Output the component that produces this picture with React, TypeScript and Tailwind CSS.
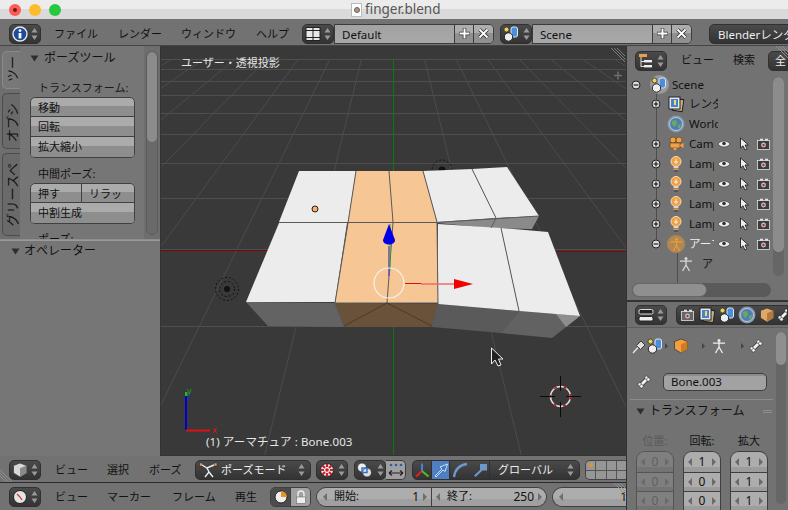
import type { ReactNode } from "react";

const dark = "bg-[linear-gradient(#4a4a4a,#333333)] border border-[#303030]";
const btn = "bg-[linear-gradient(#ababab_45%,#8e8e8e_45%)] border-[#404040]";

function UpDown({ light = false }: { light?: boolean }) {
  const c = light ? "#d0d0d0" : "#9a9a9a";
  return (
    <svg width="7" height="14" viewBox="0 0 7 14">
      <path d="M3.5 1 L6.5 5.5 H0.5 Z" fill={c} />
      <path d="M3.5 13 L6.5 8.5 H0.5 Z" fill={c} />
    </svg>
  );
}

function InfoIcon() {
  return (
    <svg width="16" height="16" viewBox="0 0 16 16">
      <circle cx="8" cy="8" r="7" fill="#1c4d9c" stroke="#e8e8e8" strokeWidth="1.4" />
      <circle cx="8" cy="4.6" r="1.4" fill="#fff" />
      <rect x="6.6" y="7" width="2.8" height="5.4" fill="#fff" />
    </svg>
  );
}

function LayoutIcon() {
  return (
    <svg width="16" height="16" viewBox="0 0 16 16">
      <rect x="1" y="1.5" width="14" height="13" fill="#e8e8e8" stroke="#222" />
      <path d="M8 1.5 V14.5 M1 4.5 H8 M8 4.5 H15 M1 11.5 H8 M8 11.5 H15" stroke="#222" />
    </svg>
  );
}

function SceneIcon() {
  return (
    <svg width="18" height="18" viewBox="0 0 18 18">
      <circle cx="4.5" cy="4.5" r="2.5" fill="#e8d25a" stroke="#333" strokeWidth="0.8" />
      <rect x="9" y="2" width="6.5" height="10" rx="2" fill="#4a8fdc" stroke="#dfe8f2" />
      <circle cx="6.5" cy="12" r="4.2" fill="#eee" stroke="#222" />
    </svg>
  );
}

function OutlinerIcon() {
  return (
    <svg width="16" height="16" viewBox="0 0 16 16">
      <rect x="1" y="1" width="8" height="3" fill="#e8a050" />
      <path d="M3 4 V14 M3 8.5 H6 M3 13.5 H6" stroke="#e0e0e0" />
      <rect x="6" y="7" width="8" height="2.4" fill="#eee" />
      <rect x="6" y="12" width="8" height="2.4" fill="#eee" />
    </svg>
  );
}

function PropsIcon() {
  return (
    <svg width="16" height="16" viewBox="0 0 16 16">
      <rect x="1" y="2.5" width="14" height="4.5" rx="1.5" fill="#222" stroke="#ddd" />
      <rect x="1" y="9.5" width="14" height="4.5" rx="1.5" fill="#eee" stroke="#222" />
    </svg>
  );
}

function CubeIcon({ fill = "#d8d8d8", side = "#8a8a8a" }: { fill?: string; side?: string }) {
  return (
    <svg width="16" height="16" viewBox="0 0 16 16">
      <path d="M8 1 L14.5 3.5 V11 L8 15 L1.5 11 V3.5 Z" fill={fill} stroke="#333" strokeWidth="0.7" />
      <path d="M8 6.2 V15 L14.5 11 V3.5 Z" fill={side} />
    </svg>
  );
}

function ClockIcon() {
  return (
    <svg width="16" height="16" viewBox="0 0 16 16">
      <circle cx="8" cy="8" r="6.5" fill="#e4e4e4" stroke="#222" />
      <path d="M8 8 L5 5 M8 8 L10 11" stroke="#c83a30" strokeWidth="1.3" />
    </svg>
  );
}

function PoseManIcon({ color = "#eee", size = 16 }: { color?: string; size?: number }) {
  return (
    <svg width={size} height={size} viewBox="0 0 16 16">
      <circle cx="8" cy="2.6" r="1.5" fill={color} />
      <path d="M2 5.2 H14 M8 4 V9 L4.5 15 M8 9 L11.5 15" stroke={color} strokeWidth="1.3" fill="none" />
    </svg>
  );
}

function PoseModeIcon() {
  return (
    <svg width="20" height="16" viewBox="0 0 20 16">
      <rect x="0.5" y="1" width="3" height="3" fill="#e8a050" stroke="#222" strokeWidth="0.5" />
      <rect x="15" y="1" width="3" height="3" fill="#e8a050" stroke="#222" strokeWidth="0.5" />
      <path d="M3 3 L8 6 L15 3 M8 6 L10 10 L6 15 M10 10 L14 15" stroke="#eee" strokeWidth="1.4" fill="none" />
    </svg>
  );
}

function PivotIcon() {
  return (
    <svg width="16" height="16" viewBox="0 0 16 16">
      <circle cx="8" cy="8" r="6.5" fill="#eee" stroke="#222" />
      <path d="M8 1.5 V5 M8 11 V14.5 M1.5 8 H5 M11 8 H14.5 M3.5 3.5 L6 6 M10 10 L12.5 12.5 M12.5 3.5 L10 6 M6 10 L3.5 12.5" stroke="#c8202c" strokeWidth="2.2" />
      <circle cx="8" cy="8" r="1.8" fill="#c8202c" />
    </svg>
  );
}

function ShadeIcon() {
  return (
    <svg width="18" height="16" viewBox="0 0 18 16">
      <circle cx="6" cy="5.5" r="4.5" fill="#eee" stroke="#222" strokeWidth="0.7" />
      <circle cx="11" cy="10.5" r="4.5" fill="#ddd" stroke="#222" strokeWidth="0.7" />
      <rect x="6" y="6" width="5" height="4.5" fill="none" stroke="#2a6fd0" strokeWidth="1.4" />
    </svg>
  );
}

function ManipIcon({ kind }: { kind: "axes" | "move" | "rot" | "scale" }) {
  if (kind === "axes") {
    return (
      <svg width="16" height="16" viewBox="0 0 16 16">
        <path d="M8 9 V1.5" stroke="#4a7fd8" strokeWidth="2" />
        <path d="M8 9 L2 14.5" stroke="#e02020" strokeWidth="2" />
        <path d="M8 9 L14.5 14.5" stroke="#50c020" strokeWidth="2" />
      </svg>
    );
  }
  const c = kind === "move" ? "#dce8f8" : "#6f97c8";
  return (
    <svg width="16" height="16" viewBox="0 0 16 16">
      {kind === "move" && (
        <path d="M2 14 L9 7 L7 5 L14.5 2 L12 9.5 L10 8 L3 15 Z" fill="#3a78c8" stroke={c} strokeWidth="0.9" />
      )}
      {kind === "rot" && <path d="M2 15 C3 7 8 3 15 2" stroke={c} strokeWidth="2.4" fill="none" />}
      {kind === "scale" && (
        <g fill={c}>
          <path d="M2 13.5 L9 7 L10.5 8.5 L3.5 15 Z" />
          <rect x="8" y="2" width="7" height="6.5" />
        </g>
      )}
    </svg>
  );
}

function TransformLinks() {
  return (
    <svg width="18" height="16" viewBox="0 0 18 16">
      <circle cx="4" cy="3" r="1.3" fill="#2a5fa0" />
      <circle cx="9" cy="3" r="1.3" fill="#2a5fa0" />
      <circle cx="14" cy="3" r="1.3" fill="#2a5fa0" />
      <path d="M2 11 H16 M2 11 L5 8.5 M2 11 L5 13.5 M16 11 L13 8.5 M16 11 L13 13.5" stroke="#222" strokeWidth="1.2" fill="none" />
    </svg>
  );
}

function EyeIcon() {
  return (
    <svg width="14" height="10" viewBox="0 0 14 10">
      <path d="M1 5 C4 1 10 1 13 5 C10 9 4 9 1 5 Z" fill="#eee" stroke="#333" strokeWidth="0.6" />
      <circle cx="7" cy="4.5" r="1.8" fill="#333" />
    </svg>
  );
}

function CursorIcon() {
  return (
    <svg width="11" height="14" viewBox="0 0 11 14">
      <path d="M1.5 1 V11 L4 8.8 L6 13 L8 12 L6 8 H9.5 Z" fill="#eee" stroke="#222" strokeWidth="0.9" />
    </svg>
  );
}

function CamIcon({ tone = "#3c3c3c" }: { tone?: string }) {
  return (
    <svg width="13" height="12" viewBox="0 0 13 12">
      <rect x="0.5" y="2.5" width="12" height="9" fill={tone} stroke="#e0e0e0" strokeWidth="0.8" />
      <rect x="3" y="0.7" width="3" height="2" fill="#e0e0e0" />
      <rect x="8" y="0.7" width="3" height="2" fill="#e0e0e0" />
      <circle cx="6.5" cy="7" r="2.4" fill="#c8c8c8" />
      <circle cx="6.5" cy="7" r="1.2" fill="#c02828" />
    </svg>
  );
}

function LampIcon() {
  return (
    <svg width="12" height="16" viewBox="0 0 12 16">
      <circle cx="6" cy="5.5" r="5" fill="#f0a048" stroke="#ffe0b0" />
      <path d="M6 3 V8 M4 6 H8" stroke="#fff3d8" />
      <rect x="3.5" y="10.5" width="5" height="1.4" fill="#e0e0e0" />
      <rect x="3.5" y="12.5" width="5" height="1.4" fill="#e0a050" />
      <rect x="4" y="14.4" width="4" height="1.2" fill="#444" />
    </svg>
  );
}

function CameraObjIcon() {
  return (
    <svg width="16" height="16" viewBox="0 0 16 16">
      <circle cx="5" cy="4" r="3" fill="#f0a048" stroke="#5a3a10" strokeWidth="0.6" />
      <circle cx="11" cy="4" r="3" fill="#f0a048" stroke="#5a3a10" strokeWidth="0.6" />
      <rect x="2" y="7" width="10" height="5" fill="#f0a048" stroke="#5a3a10" strokeWidth="0.6" />
      <path d="M12 9 L15.5 7 V12 L12 10 Z" fill="#f0a048" />
      <path d="M5 12 H9 L7 15 Z" fill="#f0a048" />
    </svg>
  );
}

function RenderIcon() {
  return (
    <svg width="18" height="18" viewBox="0 0 18 18">
      <rect x="6" y="4" width="10" height="12" fill="#c8b080" stroke="#222" transform="rotate(8 11 10)" />
      <rect x="2" y="2" width="11" height="12" fill="#e8e8e8" stroke="#222" />
      <rect x="4" y="4" width="7" height="8" fill="#4a80d0" />
      <rect x="7" y="5" width="2" height="5" fill="#f0e060" />
    </svg>
  );
}

function WorldIcon() {
  return (
    <svg width="18" height="18" viewBox="0 0 18 18">
      <circle cx="9" cy="9" r="8.5" fill="#8797aa" />
      <circle cx="9" cy="9" r="6.5" fill="#4f7fb0" stroke="#dde" strokeWidth="0.7" />
      <path d="M5 6 L9 5 L10 9 L7 12 L5 9 Z M11 10 L14 9 L13 13 L11 13 Z" fill="#6ea860" />
    </svg>
  );
}

function BoneIcon() {
  return (
    <svg width="14" height="14" viewBox="0 0 14 14">
      <path d="M4 10 L10 4" stroke="#222" strokeWidth="4.2" />
      <path d="M4 10 L10 4" stroke="#f2f2f2" strokeWidth="3" />
      <circle cx="2.8" cy="9.5" r="1.8" fill="#f2f2f2" stroke="#222" strokeWidth="0.5" />
      <circle cx="4.5" cy="11.3" r="1.8" fill="#f2f2f2" stroke="#222" strokeWidth="0.5" />
      <circle cx="9.5" cy="2.8" r="1.8" fill="#f2f2f2" stroke="#222" strokeWidth="0.5" />
      <circle cx="11.3" cy="4.5" r="1.8" fill="#f2f2f2" stroke="#222" strokeWidth="0.5" />
    </svg>
  );
}

function PinIcon() {
  return (
    <svg width="15" height="15" viewBox="0 0 15 15">
      <path d="M1 14 L6 8.5" stroke="#eee" strokeWidth="1.2" />
      <path d="M4.5 6.5 L9 2 L13 6 L8.5 10.5 Z" fill="#dedede" stroke="#222" strokeWidth="0.8" />
    </svg>
  );
}

// the little diagonal corner handle of a Blender area
function Hatch({ className, flip = false }: { className: string; flip?: boolean }) {
  return (
    <svg width="12" height="12" viewBox="0 0 12 12" className={`absolute ${className}`}>
      <path
        d={flip ? "M0 0 L12 12 M3 0 L12 9 M6 0 L12 6" : "M0 0 L12 12 M0 3 L9 12 M0 6 L6 12"}
        stroke="#8e8e8e"
      />
    </svg>
  );
}

function DropBtn({ icon, w = 32 }: { icon: ReactNode; w?: number }) {
  return (
    <div
      className={`h-[20px] rounded-[5px] ${dark} flex items-center justify-center gap-[3px] shrink-0`}
      style={{ width: w }}
    >
      {icon}
      <UpDown />
    </div>
  );
}

function NameField({ name, w }: { name: string; w: string }) {
  return (
    <div className="h-[20px] flex shrink-0 border border-[#3c3c3c] rounded-r-[5px] overflow-hidden text-[11.5px] text-[#111]">
      <div className={`${w} bg-[linear-gradient(#a2a2a2,#a8a8a8)] border-r border-[#3c3c3c] pl-[7px] leading-[19px]`}>{name}</div>
      <div className="w-[19px] bg-[linear-gradient(#adadad_45%,#909090_45%)] border-r border-[#3c3c3c] flex items-center justify-center">
        <svg width="13" height="13" viewBox="0 0 13 13">
          <path d="M6.5 1 V12 M1 6.5 H12" stroke="#333" strokeWidth="3.4" />
          <path d="M6.5 1.5 V11.5 M1.5 6.5 H11.5" stroke="#fff" strokeWidth="2" />
        </svg>
      </div>
      <div className="w-[19px] bg-[linear-gradient(#adadad_45%,#909090_45%)] flex items-center justify-center">
        <svg width="11" height="11" viewBox="0 0 11 11">
          <path d="M1.5 1.5 L9.5 9.5 M9.5 1.5 L1.5 9.5" stroke="#222" strokeWidth="3.4" />
          <path d="M1.5 1.5 L9.5 9.5 M9.5 1.5 L1.5 9.5" stroke="#fff" strokeWidth="2" />
        </svg>
      </div>
    </div>
  );
}

function Tri({ size = 9 }: { size?: number }) {
  return (
    <svg width={size} height={size - 2} viewBox="0 0 9 7" className="shrink-0">
      <path d="M0.5 0.5 H8.5 L4.5 6.5 Z" fill="#2e2e2e" />
    </svg>
  );
}

function Grip({ className = "" }: { className?: string }) {
  return (
    <span className={`w-[8px] h-[5px] bg-[radial-gradient(#b8b8b8_40%,transparent_45%)] bg-[length:2px_2px] ${className}`} />
  );
}

function ToolButton({ label, className = "" }: { label: string; className?: string }) {
  return (
    <div className={`h-[20px] border ${btn} pl-[7px] leading-[20px] text-[11px] text-[#111] ${className}`}>
      {label}
    </div>
  );
}

function SideTab({ label, className }: { label: string; className: string }) {
  return (
    <div className={`w-[19px] border border-r-0 border-[#4c4c4c] rounded-l-[5px] flex justify-center items-end ${className}`}>
      <span className="[writing-mode:vertical-rl] [text-orientation:sideways] rotate-180 text-[13px] leading-[17px] text-[#111] whitespace-nowrap">
        {label}
      </span>
    </div>
  );
}

function Tree({ children, x = 0, icon, label, tools = true, labelClass = "text-[#111]" }: {
  children?: ReactNode;
  x?: number;
  icon: ReactNode;
  label: string;
  tools?: boolean;
  labelClass?: string;
}) {
  return (
    <div className="h-[20px] flex items-center text-[11.5px] shrink-0 relative">
      <div className="shrink-0" style={{ width: x }} />
      <div className="w-[14px] flex justify-center shrink-0">{children}</div>
      <div className="w-[24px] flex justify-center shrink-0 ml-[1px]">{icon}</div>
      <div className={`w-[29px] ml-[1px] overflow-hidden whitespace-nowrap ${labelClass}`}>{label}</div>
      {tools && (
        <div className="flex items-center">
          <div className="w-[20px] flex justify-center"><EyeIcon /></div>
          <div className="w-[20px] flex justify-center"><CursorIcon /></div>
          <div className="w-[18px] flex justify-center"><CamIcon /></div>
        </div>
      )}
    </div>
  );
}

function Expander({ minus = false }: { minus?: boolean }) {
  return (
    <svg width="10" height="10" viewBox="0 0 10 10">
      <circle cx="5" cy="5" r="4" fill="#dcdcdc" stroke="#222" />
      <path d={minus ? "M2.6 5 H7.4" : "M2.6 5 H7.4 M5 2.6 V7.4"} stroke="#111" strokeWidth="1.1" />
    </svg>
  );
}

function NumCol({ label, values, off = false }: { label: string; values: string[]; off?: boolean }) {
  const text = off ? "text-[#5f5f5f]" : "text-[#111]";
  return (
    <div className="flex flex-col items-center w-[38px]">
      <div className={`h-[19px] text-[11px] leading-[19px] ${off ? "text-[#5a5a5a]" : "text-[#111]"}`}>{label}</div>
      <div className={`mt-[1px] w-full rounded-t-[9px] border border-b-0 ${off ? "border-[#555]" : "border-[#3f3f3f]"} overflow-hidden`}>
        {values.map((v, i) => (
          <div
            key={i}
            className={`h-[19.5px] flex items-center justify-between px-[4px] text-[12px] ${text} ${off ? "bg-[linear-gradient(#7f7f7f_75%,#747474_75%)]" : "bg-[linear-gradient(#adadad_75%,#9c9c9c_75%)]"} ${i ? "border-t " + (off ? "border-[#555]" : "border-[#3f3f3f]") : ""}`}
          >
            <span className="w-0 h-0 border-y-[4px] border-y-transparent border-r-[4px] border-r-[#6a6a6a]" />
            {v}
            <span className="w-0 h-0 border-y-[4px] border-y-transparent border-l-[4px] border-l-[#6a6a6a]" />
          </div>
        ))}
      </div>
    </div>
  );
}

function RangeField({ label, value, className }: { label: string; value: string; className: string }) {
  return (
    <div className={`h-full bg-[linear-gradient(#adadad_60%,#a0a0a0_60%)] flex items-center px-[4px] text-[11px] text-[#111] ${className}`}>
      <span className="w-0 h-0 border-y-[4px] border-y-transparent border-r-[4px] border-r-[#6e6e6e] mr-[7px]" />
      <span>{label}</span>
      <span className="ml-auto text-[12px] mr-[4px]">{value}</span>
      <span className="w-0 h-0 border-y-[4px] border-y-transparent border-l-[4px] border-l-[#6e6e6e]" />
    </div>
  );
}

function Scene3D() {
  const rows = [13, 23, 35, 49, 67, 88, 117, 152, 203, 280];
  const rays = [-9, -8, -7, -6, -5, -4, -3, -2, -1, 1, 2, 3, 4, 5, 6, 7, 8, 9];
  const rayX = (k: number, y: number) => 232 + (k * 98 * (y + 116)) / 401;
  return (
    <svg width="465" height="410" viewBox="0 0 465 410" className="absolute inset-0">
      {rows.map((y) => (
        <path key={y} d={`M0 ${y + 0.5} H465`} stroke="#4f4f4f" />
      ))}
      {rays.map((k) => (
        <path key={k} d={`M${rayX(k, 13)} 13 L${rayX(k, 410)} 410`} stroke="#4c4c4c" />
      ))}
      <path d="M232.5 14 V410" stroke="#0a7a0a" />
      <path d="M0 204.5 H110" stroke="#7c0606" />
      <path d="M395 205.5 H465" stroke="#8a0808" />

      {/* far lamp sits behind the mesh */}
      <circle cx="281" cy="124" r="10" fill="none" stroke="#111" strokeDasharray="2 2" />
      <circle cx="281" cy="124" r="3.5" fill="#111" />

      <polygon points="276,176 378,170 371,183 330,182 276,177" fill="#8a8a8a" />
      <polygon points="138,125 195,125 187,176 118,176" fill="#ececec" />
      <polygon points="262,125 311,123 335,172 276,176" fill="#ececec" />
      <polygon points="311,123 346,121 378,170 335,172" fill="#ececec" />
      <polygon points="85,256 174,257 183,281 107,280" fill="#636363" />
      <polygon points="277,258 358,265 340,287 271,281" fill="#5a5a5a" />
      <polygon points="358,265 419,270 391,292 340,287" fill="#626262" />
      <polygon points="395,268 419,270 405,281" fill="#8e8e8e" />
      <polygon points="174,257 277,258 271,281 183,281" fill="#6a5139" />
      <polygon points="118,177 186,177 174,256 85,256" fill="#ececec" />
      <polygon points="277,178 340,182 358,265 277,258" fill="#ececec" />
      <polygon points="340,182 387,186 419,270 358,265" fill="#ececec" />
      <polygon points="195,125 262,125 276,176 187,176" fill="#f6c795" />
      <polygon points="187,177 276,177 277,257 174,257" fill="#f6c795" />

      <g stroke="#5a5a5a" strokeWidth="1" fill="none">
        <path d="M118 176.5 H276 L378 170" />
        <path d="M195 125 L187 177 L174 257 L183 281" />
        <path d="M262 125 L276 176 L277 258 L271 281" />
        <path d="M228 125 L232 176 L226 257" />
        <path d="M311 123 L335 172 L330 182" />
        <path d="M340 182 L358 265 L340 287" />
        <path d="M174 257 H277" />
        <path d="M226 257 L183 280 M226 257 L271 280" stroke="#4a3a2a" />
      </g>

      <circle cx="154" cy="163" r="3" fill="#f6b26b" stroke="#222" />
      <path d="M228 200 V230" stroke="#6c48b8" strokeWidth="1.5" />
      <path d="M229 178 V225" stroke="#30b030" />
      <path d="M228 178 L222 194 C222 200 234 200 234 194 Z" fill="#0000e8" />
      <circle cx="228" cy="237" r="15" fill="none" stroke="#f4f4f4" strokeWidth="1.1" />
      <path d="M244 237.5 H260" stroke="#d81010" />
      <path d="M260 238 H294" stroke="#f06a6a" strokeWidth="1.6" />
      <polygon points="293,233 312,238 293,243" fill="#f00000" />

      {/* lamp on the left, 3d cursor, mouse pointer */}
      <circle cx="66" cy="243" r="11.5" fill="none" stroke="#111" strokeDasharray="2 2" />
      <circle cx="66" cy="243" r="7.5" fill="none" stroke="#111" strokeDasharray="2 2" />
      <circle cx="66" cy="243" r="3" fill="#111" />
      <circle cx="399.5" cy="350.5" r="10" fill="none" stroke="#ddd" strokeWidth="1.5" />
      <circle cx="399.5" cy="350.5" r="10" fill="none" stroke="#c81010" strokeWidth="1.5" strokeDasharray="3 7" />
      <path d="M399.5 330 V345 M399.5 356 V371 M379 350.5 H394 M405 350.5 H420" stroke="#0a0a0a" />
      <path d="M330.5 302 V318 L334 314 L337 320 L340 319 L337.5 313 H342 Z" fill="#222" stroke="#eee" />

      <path d="M25 384 V350" stroke="#0000d0" strokeWidth="2" />
      <path d="M25 384.5 H49" stroke="#e01010" strokeWidth="2" />
      <rect x="24" y="346" width="2.4" height="4" fill="#20c020" />
      <text x="26" y="348" fontSize="9" fill="#20a020">y</text>
      <text x="26" y="354" fontSize="9" fill="#2030b0">z</text>
      <text x="51" y="387" fontSize="9" fill="#e01010">x</text>

      <path d="M450 2 L464 16 M453 2 L464 13 M456 2 L464 10" stroke="#7a7a7a" />
      <path d="M453 29.5 H461 M457 25.5 V33.5" stroke="#6e6e6e" strokeWidth="1.6" />
    </svg>
  );
}

export default function App() {
  return (
    <div className="w-[788px] h-[510px] overflow-hidden flex flex-col bg-[#727272] font-['Noto_Sans','Noto_Sans_CJK_JP',sans-serif] text-[#111] whitespace-nowrap">
      {/* title bar */}
      <div className="h-[19px] shrink-0 bg-[linear-gradient(#ececec_47%,#dadada_47%)] flex items-center relative">
        <div className="flex gap-[8px] ml-[9px]">
          <span className="w-[12px] h-[12px] rounded-full bg-[#fc5b57] flex items-center justify-center">
            <span className="w-[4px] h-[4px] rounded-full bg-[#7a1410]" />
          </span>
          <span className="w-[12px] h-[12px] rounded-full bg-[#febb2e]" />
          <span className="w-[12px] h-[12px] rounded-full bg-[#27c93f]" />
        </div>
        <div className="absolute left-[351px] top-0 flex items-center gap-[3px] text-[13.5px] leading-[19px] text-[#555]">
          <span className="w-[11px] h-[14px] bg-white border border-[#bbb] flex items-center justify-center">
            <span className="w-[6px] h-[6px] rounded-full bg-[#e08a3a] border border-[#3a6ea5]" />
          </span>
          finger.blend
        </div>
      </div>

      {/* info header */}
      <div className="h-[27px] shrink-0 flex items-center pl-[9px] pt-[3px] border-b border-[#454545] bg-[#727272]">
        <DropBtn icon={<InfoIcon />} />
        <div className="flex text-[11px] ml-[13px] gap-[21px] pt-[1px]">
          <span className="w-[43px]">ファイル</span>
          <span className="w-[42px]">レンダー</span>
          <span className="w-[54px]">ウィンドウ</span>
          <span className="w-[32px]">ヘルプ</span>
        </div>
        <div className="ml-[14px] flex">
          <DropBtn icon={<LayoutIcon />} />
          <NameField name="Default" w="w-[120px]" />
        </div>
        <div className="ml-[6px] flex">
          <DropBtn icon={<SceneIcon />} />
          <NameField name="Scene" w="w-[120px]" />
        </div>
        <div className={`ml-[17px] h-[20px] w-[100px] shrink-0 rounded-l-[5px] ${dark} pl-[8px] text-[11.5px] leading-[19px] text-[#eee] overflow-hidden`}>
          Blenderレンダ
        </div>
      </div>

      <div className="flex-1 flex min-h-0">
        <div className="w-[626px] shrink-0 flex flex-col">
          <div className="h-[410px] shrink-0 flex">
            {/* tool shelf */}
            <div className="w-[161px] shrink-0 flex flex-col border-r border-[#333]">
              <div className="h-[193px] shrink-0 flex bg-[#6e6e6e] overflow-hidden">
                <div className="w-[20px] shrink-0 pl-[2px] pt-[5px] flex flex-col gap-[4px]">
                  <SideTab label="ツー" className="h-[38px] bg-[#787878] border-[#8a8a8a] pb-[6px]" />
                  <SideTab label="オプシ" className="h-[56px] bg-[#6a6a6a] pb-[6px]" />
                  <SideTab label="グリースペ" className="h-[83px] bg-[#6a6a6a] pb-[9px]" />
                </div>
                <div className="w-[124px] shrink-0 bg-[#767676] px-[10px] overflow-hidden">
                  <div className="h-[24px] flex items-center -ml-[9px] mr-[-8px]">
                    <span className="ml-[9px]"><Tri /></span>
                    <span className="ml-[5px] text-[12px] flex-1">ポーズツール</span>
                    <Grip className="mr-[1px]" />
                  </div>
                  <div className="mt-[9px] mb-[1px] h-[17px] text-[11px] leading-[17px] ml-[8px] text-[#1a1a1a]">トランスフォーム:</div>
                  <div className="rounded-[5px] overflow-hidden flex flex-col w-[105px] border-b border-[#404040]">
                    <ToolButton label="移動" className="rounded-t-[5px]" />
                    <ToolButton label="回転" className="border-t-0" />
                    <ToolButton label="拡大縮小" className="border-t-0 border-b-0" />
                  </div>
                  <div className="mt-[7px] h-[17px] text-[11px] leading-[17px] ml-[8px]">中間ポーズ:</div>
                  <div className="rounded-[5px] overflow-hidden flex flex-col w-[105px] mt-[1px] border-b border-[#404040]">
                    <div className="flex">
                      <ToolButton label="押す" className="w-[52px] rounded-tl-[5px]" />
                      <ToolButton label="リラッ" className="flex-1 border-l-0 rounded-tr-[5px]" />
                    </div>
                    <ToolButton label="中割生成" className="border-t-0 border-b-0" />
                  </div>
                  <div className="mt-[6px] text-[11px] leading-[17px] ml-[8px]">ポーズ:</div>
                </div>
                <div className="w-[16px] shrink-0 pl-[2px] pt-[5px]">
                  <div className="w-[12px] h-[184px] rounded-full bg-[#6a6a6a] border border-[#5c5c5c] overflow-hidden">
                    <div className="h-[90px] bg-[#8c8c8c] rounded-full" />
                  </div>
                </div>
              </div>
              <div className="flex-1 bg-[#767676] border-t border-[#8e8e8e] shadow-[inset_0_1px_0_#9a9a9a]">
                <div className="h-[22px] flex items-center pl-[11px] pr-[13px]">
                  <Tri />
                  <span className="ml-[4px] text-[12px] flex-1">オペレーター</span>
                  <Grip />
                </div>
              </div>
            </div>

            {/* 3d view */}
            <div className="flex-1 relative bg-[#393939] overflow-hidden border-b border-[#333]">
              <Scene3D />
              <div className="absolute left-[20px] top-[9px] text-[11px] leading-[16px] text-[#e6e6e6]">ユーザー・透視投影</div>
              <div className="absolute left-[45px] top-[388px] text-[11.5px] leading-[16px] tracking-[0.1px] text-[#e6e6e6]">(1) アーマチュア : Bone.003</div>
            </div>
          </div>

          {/* 3d view header */}
          <div className="h-[26px] shrink-0 flex items-center pl-[9px] pt-[2px] bg-[#727272] relative">
            <Hatch className="left-0 bottom-0" />
            <DropBtn icon={<CubeIcon />} />
            <div className="flex text-[11px] ml-[14px] gap-[21px] pt-[1px]">
              <span className="w-[31px]">ビュー</span>
              <span className="w-[21px]">選択</span>
              <span className="w-[32px]">ボーズ</span>
            </div>
            <div className={`ml-[14px] w-[116px] h-[20px] rounded-[5px] ${dark} flex items-center pl-[3px] pr-[5px] shrink-0`}>
              <PoseModeIcon />
              <span className="ml-[2px] text-[11px] text-[#eee] flex-1">ポーズモード</span>
              <UpDown />
            </div>
            <div className="ml-[5px]"><DropBtn icon={<PivotIcon />} /></div>
            <div className="ml-[6px] flex">
              <DropBtn icon={<ShadeIcon />} />
              <div className="w-[20px] h-[20px] bg-[#a0a0a0] border border-l-0 border-[#3c3c3c] rounded-r-[5px] flex items-center justify-center shrink-0">
                <TransformLinks />
              </div>
            </div>
            <div className={`ml-[6px] h-[20px] rounded-[5px] ${dark} flex items-center shrink-0`}>
              <span className="w-[18px] flex justify-center"><ManipIcon kind="axes" /></span>
              <span className="w-[19px] h-full bg-[#4f7fc0] border-x border-[#303030] flex items-center justify-center"><ManipIcon kind="move" /></span>
              <span className="w-[20px] flex justify-center"><ManipIcon kind="rot" /></span>
              <span className="w-[20px] border-r border-[#303030] h-full flex items-center justify-center"><ManipIcon kind="scale" /></span>
              <span className="w-[89px] flex items-center pl-[8px] pr-[5px] text-[11px] text-[#eee]">
                <span className="flex-1">グローバル</span>
                <UpDown />
              </span>
            </div>
            <div className="ml-[5px] w-[41px] h-[20px] rounded-l-[5px] overflow-hidden grid grid-cols-4 grid-rows-2 gap-px border border-r-0 border-[#444] bg-[#555] shrink-0">
              <span className="bg-[#969696] flex items-center justify-center">
                <span className="w-[4px] h-[4px] rounded-full bg-[#e8932f]" />
              </span>
              {[0, 1, 2, 3, 4, 5, 6].map((i) => (
                <span key={i} className="bg-[#969696]" />
              ))}
            </div>
          </div>

          <div className="h-px shrink-0 bg-[#2a2a2a]" />

          {/* timeline header */}
          <div className="flex-1 flex items-center pl-[9px] bg-[#727272] relative">
            <DropBtn icon={<ClockIcon />} />
            <div className="flex text-[11px] ml-[14px] gap-[21px] pt-[1px]">
              <span className="w-[31px]">ビュー</span>
              <span className="w-[44px]">マーカー</span>
              <span className="w-[42px]">フレーム</span>
              <span className="w-[22px]">再生</span>
            </div>
            <div className="ml-[13px] h-[20px] w-[41px] shrink-0 flex rounded-[5px] border border-[#404040] overflow-hidden">
              <span className="w-[20px] bg-[#4c4c4c] border-r border-[#404040] flex items-center justify-center">
                <svg width="14" height="14" viewBox="0 0 14 14">
                  <circle cx="7" cy="7" r="6" fill="#eee" stroke="#222" />
                  <path d="M7 7 V1 A6 6 0 0 1 13 7 Z" fill="#e8922e" />
                </svg>
              </span>
              <span className="flex-1 bg-[#a2a2a2] flex items-center justify-center">
                <svg width="12" height="14" viewBox="0 0 12 14">
                  <path d="M3 7 V4 A3 3 0 0 1 9 4 V7" fill="none" stroke="#eee" strokeWidth="1.4" />
                  <rect x="1.5" y="7" width="9" height="6.5" fill="#eee" stroke="#555" strokeWidth="0.5" />
                </svg>
              </span>
            </div>
            <div className="ml-[5px] h-[20px] w-[231px] shrink-0 flex rounded-full border border-[#404040] overflow-hidden">
              <RangeField label="開始:" value="1" className="w-[115px] border-r border-[#404040] pl-[6px]" />
              <RangeField label="終了:" value="250" className="flex-1" />
            </div>
            <div className="ml-[5px] h-[20px] flex-1 rounded-l-full border border-r-0 border-[#404040] overflow-hidden">
              <RangeField label="" value="1" className="w-[86px] pl-[6px]" />
            </div>
            <Hatch className="right-0 top-0" flip />
          </div>
        </div>

        {/* right column */}
        <div className="flex-1 min-w-0 flex flex-col border-l border-[#333]">
          <div className="h-[256px] shrink-0 flex flex-col bg-[#727272] border-b-2 border-[#333] relative overflow-hidden">
            <div className="h-[27px] flex items-center pl-[8px] pt-[2px] shrink-0">
              <DropBtn icon={<OutlinerIcon />} />
              <span className="ml-[14px] w-[52px] text-[11px]">ビュー</span>
              <span className="w-[35px] text-[11px]">検索</span>
              <div className={`h-[20px] flex-1 rounded-l-[5px] ${dark} pl-[6px] text-[11px] leading-[18px] text-[#eee]`}>全</div>
            </div>
            <Hatch className="right-0 top-0" flip />
            <div className="flex min-h-0 flex-1 relative">
              {/* tree connector lines */}
              <span className="absolute left-[29px] top-[21px] w-px h-[150px] bg-[#4e4e4e]" />
              <span className="absolute left-[50px] top-[180px] w-px h-[30px] bg-[#4e4e4e]" />
              <div className="flex-1 min-w-0 flex flex-col pl-[1px] pt-[2px]">
                <div className="h-[19px] flex items-center text-[11.5px] shrink-0 relative">
                  <div className="w-[14px] flex justify-center ml-[1px]"><Expander minus /></div>
                  <div className="w-[22px] flex justify-center ml-[5px]">
                    <span className="w-[19px] h-[19px] rounded-full bg-[#9a9a9a] flex items-center justify-center"><SceneIcon /></span>
                  </div>
                  <span className="ml-[2px]">Scene</span>
                </div>
                <Tree x={21} icon={<RenderIcon />} label="レンダ" tools={false}><Expander /></Tree>
                <Tree x={21} icon={<WorldIcon />} label="World" tools={false} />
                <Tree x={21} icon={<CameraObjIcon />} label="Camera"><Expander /></Tree>
                <Tree x={21} icon={<LampIcon />} label="Lamp"><Expander /></Tree>
                <Tree x={21} icon={<LampIcon />} label="Lamp"><Expander /></Tree>
                <Tree x={21} icon={<LampIcon />} label="Lamp"><Expander /></Tree>
                <Tree x={21} icon={<LampIcon />} label="Lamp"><Expander /></Tree>
                <Tree
                  x={21}
                  icon={
                    <span className="w-[18px] h-[18px] rounded-full bg-[#b08850] flex items-center justify-center">
                      <PoseManIcon color="#f09a40" size={15} />
                    </span>
                  }
                  label="アーマ"
                  labelClass="text-[#eee]"
                >
                  <Expander minus />
                </Tree>
                <div className="h-[20px] flex items-center text-[11px] pl-[50px] shrink-0">
                  <PoseManIcon color="#d8d8d8" size={16} />
                  <span className="ml-[8px]">ア</span>
                </div>
              </div>
              <div className="w-[16px] shrink-0 pt-[4px] pl-[1px]">
                <div className="w-[11px] h-[199px] rounded-full bg-[#666] overflow-hidden">
                  <div className="h-[175px] rounded-full bg-[#8c8c8c]" />
                </div>
              </div>
            </div>
            <div className="absolute left-[5px] bottom-[3px] h-[14px] w-[139px] rounded-full bg-[#5a5a5a] overflow-hidden">
              <div className="h-full w-[75px] rounded-full bg-[#8f8f8f] border border-[#666]" />
            </div>
          </div>

          {/* properties */}
          <div className="flex-1 min-h-0 bg-[#727272] overflow-hidden flex flex-col">
            <div className="h-[26px] shrink-0 flex items-center pl-[8px] bg-[#6f6f6f] border-b border-[#5e5e5e]">
              <DropBtn icon={<PropsIcon />} />
              <div className={`ml-[9px] h-[20px] flex-1 rounded-l-[5px] ${dark} flex items-center`}>
                <span className="w-[20px] flex justify-center"><CamIcon tone="#666" /></span>
                <span className="w-[20px] flex justify-center"><RenderIcon /></span>
                <span className="w-[20px] flex justify-center"><SceneIcon /></span>
                <span className="w-[20px] flex justify-center"><WorldIcon /></span>
                <span className="w-[20px] flex justify-center"><CubeIcon fill="#e0a868" side="#b07a40" /></span>
                <span className="w-[10px] overflow-hidden"><BoneIcon /></span>
              </div>
            </div>
            <div className="flex flex-1 min-h-0">
              <div className="w-[146px] shrink-0 flex flex-col">
                <div className="h-[30px] mt-[3px] flex items-center pl-[5px] shrink-0">
                  <PinIcon />
                  <span className="-ml-[1px]"><SceneIcon /></span>
                  <span className="w-0 h-0 border-y-[3px] border-y-transparent border-l-[3px] border-l-[#444] ml-[1px]" />
                  <span className="ml-[5px]"><CubeIcon fill="#f0a040" side="#d07c20" /></span>
                  <span className="w-0 h-0 border-y-[3px] border-y-transparent border-l-[3px] border-l-[#444] ml-[13px]" />
                  <span className="ml-[6px]"><PoseManIcon /></span>
                  <span className="w-0 h-0 border-y-[3px] border-y-transparent border-l-[3px] border-l-[#444] ml-[14px]" />
                  <span className="ml-[5px]"><BoneIcon /></span>
                </div>
                <div className="h-[20px] mt-[11px] flex items-center pl-[10px] shrink-0">
                  <BoneIcon />
                  <div className="ml-[12px] w-[104px] h-[18px] rounded-[5px] border border-[#3f3f3f] bg-[linear-gradient(#8c8c8c_15%,#a2a2a2_15%)] pl-[7px] text-[11.5px] leading-[16px]">Bone.003</div>
                </div>
                <div className="mt-[7px] ml-[3px] h-px bg-[#8c8c8c] shrink-0 w-[143px]" />
                <div className="h-[24px] -mt-[1px] flex items-center pl-[9px] pr-[1px] w-[146px] shrink-0">
                  <Tri />
                  <span className="ml-[4px] text-[12px] flex-1">トランスフォーム</span>
                  <span className="w-[9px] h-[3px] border-y border-[#8e8e8e]" />
                </div>
                <div className="flex gap-[9px] pl-[9px] mt-[8px]">
                  <NumCol label="位置:" values={["0", "0", "0"]} off />
                  <NumCol label="回転:" values={["1", "0", "0"]} />
                  <NumCol label="拡大" values={["1", "1", "1"]} />
                </div>
              </div>
              <div className="flex-1 pl-[3px] pt-[4px]">
                <div className="w-[10px] h-[172px] rounded-full bg-[#666] overflow-hidden">
                  <div className="h-[33px] rounded-full bg-[#8f8f8f]" />
                </div>
              </div>
            </div>
          </div>
        </div>
      </div>
    </div>
  );
}
